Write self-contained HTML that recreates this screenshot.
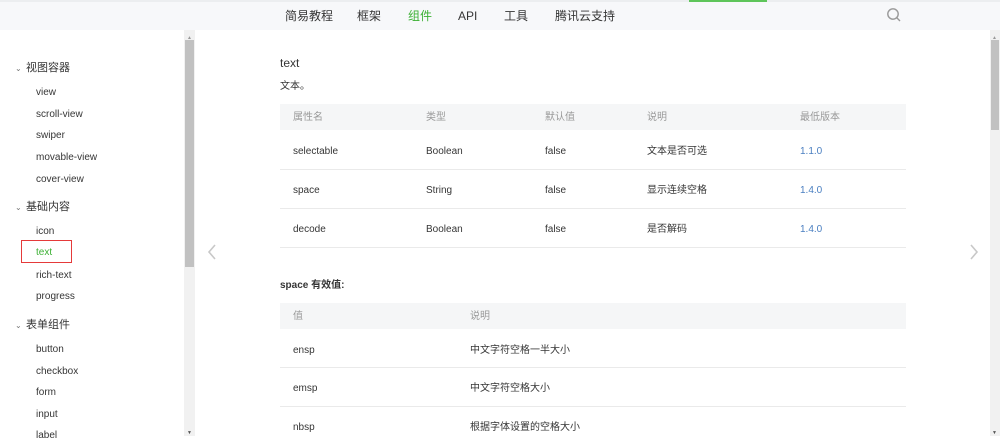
<!DOCTYPE html>
<html><head><meta charset="utf-8"><style>
*{margin:0;padding:0;box-sizing:border-box}
body{width:1000px;height:436px;overflow:hidden;background:#fff;font-family:"Liberation Sans","Noto Sans CJK SC",sans-serif;color:#353535;position:relative}
.a{position:absolute;white-space:nowrap;line-height:14px}
.nav{position:absolute;left:0;top:0;width:1000px;height:30px;background:#f7f8fa;border-top:2px solid #eceef0}
.nav span{position:absolute;top:6px;font-size:12px;line-height:16px;color:#353535}
.sb{font-size:10px;color:#353535}
.g{font-size:11px;color:#353535}
.chev{font-size:8px;color:#777}
.row{position:absolute;left:280px;width:626px;border-bottom:1px solid #eaeaea}
.hd{position:absolute;left:280px;width:626px;height:26px;background:#f5f6f7}
.th{font-size:10px;color:#999}
.td{font-size:10px;color:#353535}
.v{font-size:10px;color:#4a7fc1}
</style></head><body>
<div class="nav">
<span style="left:285px">简易教程</span>
<span style="left:357px">框架</span>
<span style="left:408px;color:#3cb034">组件</span>
<span style="left:458px">API</span>
<span style="left:504px">工具</span>
<span style="left:555px">腾讯云支持</span>
<div class="a" style="left:689px;top:-2px;width:78px;height:2px;background:#5ec55a"></div>
<svg class="a" style="left:886px;top:5px" width="16" height="16" viewBox="0 0 16 16"><circle cx="7" cy="7" r="5.2" fill="none" stroke="#999" stroke-width="1.4"/><line x1="10.8" y1="10.8" x2="14" y2="14" stroke="#999" stroke-width="1.4"/></svg>
</div>
<div class="a" style="left:184px;top:30px;width:11px;height:406px;background:#f1f1f1"></div>
<div class="a" style="left:185px;top:40px;width:9px;height:227px;background:#c1c1c1"></div>
<div class="a" style="left:187px;top:31px;font-size:5px;color:#999">▲</div>
<div class="a" style="left:187px;top:426px;font-size:5px;color:#555">▼</div>
<div class="a" style="left:990px;top:30px;width:10px;height:406px;background:#f1f1f1"></div>
<div class="a" style="left:991px;top:40px;width:8px;height:90px;background:#c1c1c1"></div>
<div class="a" style="left:992px;top:31px;font-size:5px;color:#999">▲</div>
<div class="a" style="left:992px;top:426px;font-size:5px;color:#555">▼</div>

<div class="a chev" style="left:15px;top:62px">⌄</div><div class="a g" style="left:26px;top:61px">视图容器</div>
<div class="a sb" style="left:36px;top:86px">view</div>
<div class="a sb" style="left:36px;top:108px">scroll-view</div>
<div class="a sb" style="left:36px;top:129px">swiper</div>
<div class="a sb" style="left:36px;top:151px">movable-view</div>
<div class="a sb" style="left:36px;top:173px">cover-view</div>
<div class="a chev" style="left:15px;top:201px">⌄</div><div class="a g" style="left:26px;top:200px">基础内容</div>
<div class="a sb" style="left:36px;top:225px">icon</div>
<div class="a" style="left:21px;top:240px;width:51px;height:23px;border:1px solid #e53a3a"></div>
<div class="a sb" style="left:36px;top:246px;color:#3cb034">text</div>
<div class="a sb" style="left:36px;top:269px">rich-text</div>
<div class="a sb" style="left:36px;top:290px">progress</div>
<div class="a chev" style="left:15px;top:319px">⌄</div><div class="a g" style="left:26px;top:318px">表单组件</div>
<div class="a sb" style="left:36px;top:343px">button</div>
<div class="a sb" style="left:36px;top:365px">checkbox</div>
<div class="a sb" style="left:36px;top:386px">form</div>
<div class="a sb" style="left:36px;top:408px">input</div>
<div class="a sb" style="left:36px;top:429px">label</div>

<svg class="a" style="left:206px;top:244px" width="12" height="16"><polyline points="9,1 3,8 9,15" fill="none" stroke="#c8c8c8" stroke-width="1.6"/></svg>
<svg class="a" style="left:968px;top:244px" width="12" height="16"><polyline points="3,1 9,8 3,15" fill="none" stroke="#c8c8c8" stroke-width="1.6"/></svg>

<div class="a" style="left:280px;top:56px;font-size:12px">text</div>
<div class="a" style="left:280px;top:80px;font-size:10px">文本。</div>

<div class="hd" style="top:104px"></div>
<div class="a th" style="left:293px;top:111px">属性名</div>
<div class="a th" style="left:426px;top:111px">类型</div>
<div class="a th" style="left:545px;top:111px">默认值</div>
<div class="a th" style="left:647px;top:111px">说明</div>
<div class="a th" style="left:800px;top:111px">最低版本</div>
<div class="row" style="top:130px;height:40px"></div>
<div class="row" style="top:170px;height:39px"></div>
<div class="row" style="top:209px;height:39px"></div>
<div class="a td" style="left:293px;top:145px">selectable</div><div class="a td" style="left:426px;top:145px">Boolean</div><div class="a td" style="left:545px;top:145px">false</div><div class="a td" style="left:647px;top:145px">文本是否可选</div><div class="a v" style="left:800px;top:145px">1.1.0</div>
<div class="a td" style="left:293px;top:184px">space</div><div class="a td" style="left:426px;top:184px">String</div><div class="a td" style="left:545px;top:184px">false</div><div class="a td" style="left:647px;top:184px">显示连续空格</div><div class="a v" style="left:800px;top:184px">1.4.0</div>
<div class="a td" style="left:293px;top:223px">decode</div><div class="a td" style="left:426px;top:223px">Boolean</div><div class="a td" style="left:545px;top:223px">false</div><div class="a td" style="left:647px;top:223px">是否解码</div><div class="a v" style="left:800px;top:223px">1.4.0</div>

<div class="a" style="left:280px;top:279px;font-size:10px;font-weight:bold">space 有效值:</div>
<div class="hd" style="top:303px"></div>
<div class="a th" style="left:293px;top:310px">值</div>
<div class="a th" style="left:470px;top:310px">说明</div>
<div class="row" style="top:329px;height:39px"></div>
<div class="row" style="top:368px;height:39px"></div>
<div class="a td" style="left:293px;top:344px">ensp</div><div class="a td" style="left:470px;top:344px">中文字符空格一半大小</div>
<div class="a td" style="left:293px;top:382px">emsp</div><div class="a td" style="left:470px;top:382px">中文字符空格大小</div>
<div class="a td" style="left:293px;top:421px">nbsp</div><div class="a td" style="left:470px;top:421px">根据字体设置的空格大小</div>
</body></html>
